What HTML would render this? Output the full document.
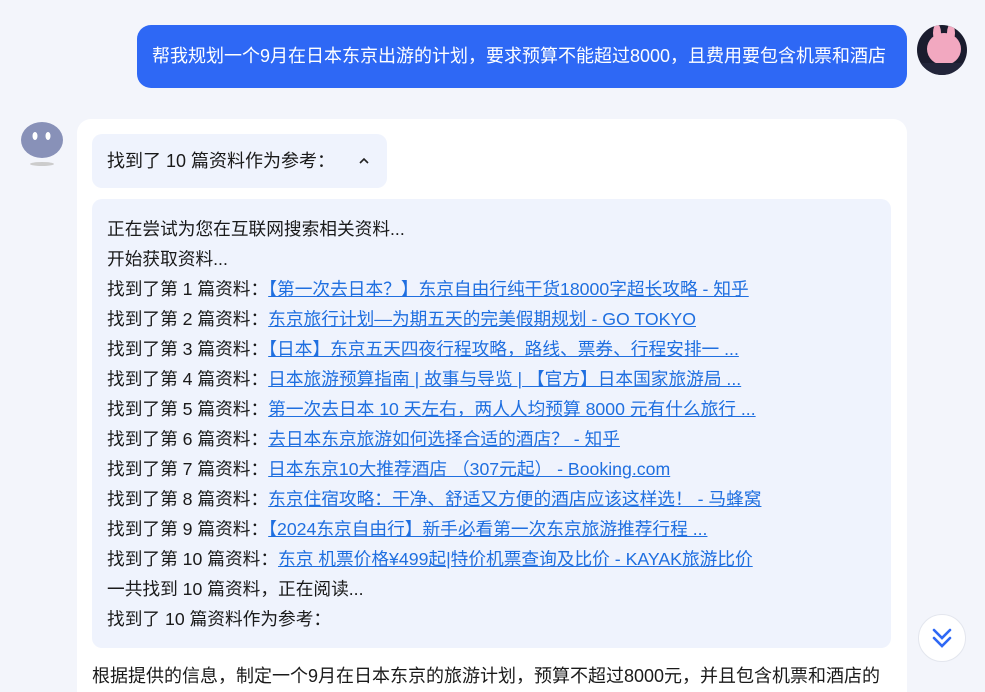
<!DOCTYPE html><html><head><meta charset="utf-8"><style>
html,body{margin:0;width:985px;height:692px;overflow:hidden}
body{background:#f3f5fb;font-family:"Liberation Sans","Noto Sans CJK SC",sans-serif;color:#1a1a1a;position:relative}
.ub{position:absolute;left:137px;top:25px;width:770px;height:63px;background:#2e68f5;border-radius:14px;color:#fff;font-size:18px;line-height:63px;box-sizing:border-box;padding-left:15px;white-space:nowrap}
.ua{position:absolute;left:917px;top:25px;width:50px;height:50px;border-radius:50%;background:#1a1c2e;overflow:hidden}
.card{position:absolute;left:77px;top:119px;width:830px;height:573px;background:#fff;border-radius:14px 14px 0 0}
.hd{position:absolute;left:15px;top:15px;width:295px;height:54px;background:#eff3fd;border-radius:10px;font-size:18px;line-height:54px;padding-left:15px;box-sizing:border-box}
.box{position:absolute;left:15px;top:80px;width:799px;height:449px;background:#eff3fd;border-radius:10px;padding:15px 15px;box-sizing:border-box;font-size:17.7px;line-height:30px;white-space:nowrap}
a{color:#1f6fe0;text-decoration:underline}
.ft{position:absolute;left:15px;top:543px;font-size:18px;white-space:nowrap}
.down{position:absolute;left:918px;top:614px;width:48px;height:48px;border-radius:50%;background:#fff;border:1px solid #e3e6ee;box-sizing:border-box}
</style></head><body>
<div class="ub">帮我规划一个9月在日本东京出游的计划，要求预算不能超过8000，且费用要包含机票和酒店</div>
<div class="ua"><svg width="50" height="50"><ellipse cx="27" cy="24" rx="17" ry="16" fill="#f2a8c0"/><ellipse cx="20" cy="8" rx="4" ry="9" fill="#f2a8c0"/><ellipse cx="34" cy="8" rx="4" ry="9" fill="#f2a8c0"/><rect x="0" y="38" width="50" height="12" fill="#22253a"/></svg></div>
<svg style="position:absolute;left:20px;top:122px" width="44" height="46"><ellipse cx="22" cy="18" rx="21" ry="18" fill="#8891b8"/><ellipse cx="15" cy="14" rx="2.5" ry="4" fill="#fff"/><ellipse cx="28" cy="14" rx="2.5" ry="4" fill="#fff"/><ellipse cx="22" cy="42" rx="12" ry="2" fill="#ccc"/></svg>
<div class="card">
<div class="hd">找到了 10 篇资料作为参考：<svg style="position:absolute;left:266px;top:22px" width="12" height="10"><path d="M2 7L6 3L10 7" stroke="#222" stroke-width="1.6" fill="none"/></svg></div>
<div class="box">
正在尝试为您在互联网搜索相关资料...<br>开始获取资料...<br>
找到了第 1 篇资料：<a>【第一次去日本？】东京自由行纯干货18000字超长攻略 - 知乎</a><br>
找到了第 2 篇资料：<a>东京旅行计划—为期五天的完美假期规划 - GO TOKYO</a><br>
找到了第 3 篇资料：<a>【日本】东京五天四夜行程攻略，路线、票券、行程安排一 ...</a><br>
找到了第 4 篇资料：<a>日本旅游预算指南 | 故事与导览 | 【官方】日本国家旅游局 ...</a><br>
找到了第 5 篇资料：<a>第一次去日本 10 天左右，两人人均预算 8000 元有什么旅行 ...</a><br>
找到了第 6 篇资料：<a>去日本东京旅游如何选择合适的酒店？ - 知乎</a><br>
找到了第 7 篇资料：<a>日本东京10大推荐酒店 （307元起） - Booking.com</a><br>
找到了第 8 篇资料：<a>东京住宿攻略：干净、舒适又方便的酒店应该这样选！ - 马蜂窝</a><br>
找到了第 9 篇资料：<a>【2024东京自由行】新手必看第一次东京旅游推荐行程 ...</a><br>
找到了第 10 篇资料：<a>东京 机票价格¥499起|特价机票查询及比价 - KAYAK旅游比价</a><br>
一共找到 10 篇资料，正在阅读...<br>找到了 10 篇资料作为参考：
</div>
<div class="ft">根据提供的信息，制定一个9月在日本东京的旅游计划，预算不超过8000元，并且包含机票和酒店的</div>
</div>
<div class="down"><svg width="46" height="46"><path d="M15 15L23 23L31 15M15 23L23 31L31 23" stroke="#2e68f5" stroke-width="2.6" fill="none" stroke-linecap="round"/></svg></div>
</body></html>
